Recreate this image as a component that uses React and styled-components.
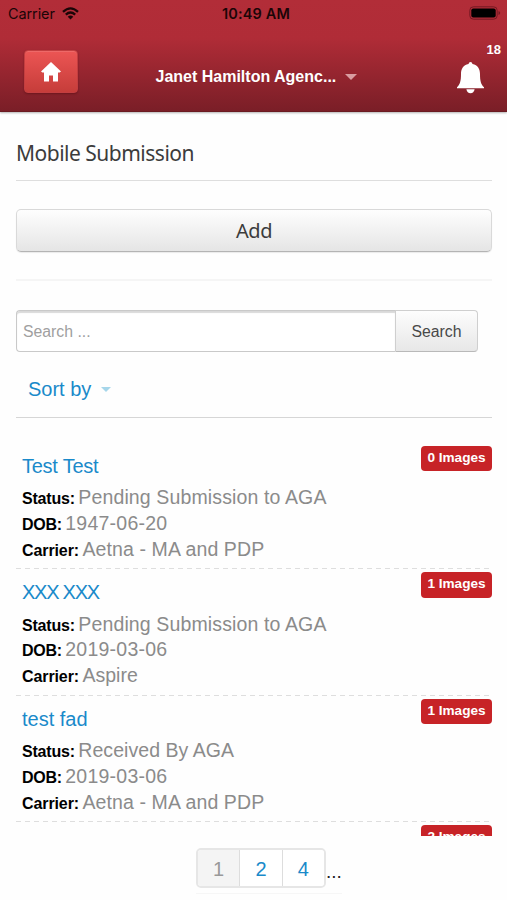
import React from "react";
import styled, { createGlobalStyle } from "styled-components";

const Global = createGlobalStyle`
  * { box-sizing: border-box; }
  body { margin: 0; background: #fff; }
`;

const Screen = styled.div`
  width: 507px;
  height: 900px;
  overflow: hidden;
  display: flex;
  flex-direction: column;
  background: #fefefe;
  color: #333;
  font-family: "Liberation Sans", Arial, sans-serif;
  white-space: nowrap;
`;

const Header = styled.header`
  flex: none;
  height: 112px;
  background: linear-gradient(#b22d38 0, #b02c37 38px, #7a1e27 111px);
  border-bottom: 1px solid #6b1b22;
  box-shadow: 0 1px 2px rgba(0, 0, 0, 0.3);
`;

const StatusBar = styled.div`
  height: 28px;
  display: grid;
  grid-template-columns: 1fr auto 1fr;
  align-items: center;
  padding: 0 6px 0 8px;
  font-family: Inter, sans-serif;
  font-size: 14.5px;
  line-height: 18px;
  color: #1b0507;
`;

const Carrier = styled.div`
  display: flex;
  align-items: center;
  gap: 7px;
  margin-top: -1px;
  letter-spacing: -0.1px;
`;

const Clock = styled.div`
  font-weight: 600;
  letter-spacing: 0.15px;
  margin: -1px -3px 0 0;
`;

const BatteryIcon = styled.svg`
  display: block;
  justify-self: end;
  margin-top: -2px;
`;

const NavBar = styled.nav`
  height: 83px;
  display: flex;
  align-items: flex-start;
  padding: 22px 6px 0 24px;
`;

const HomeButton = styled.button`
  width: 54px;
  height: 43px;
  padding: 0;
  border: 1px solid #c33e40;
  border-radius: 4px;
  background: linear-gradient(#ec5554, #c63d3a);
  box-shadow: 0 1px 2px rgba(60, 0, 0, 0.35), inset 0 1px 0 rgba(255, 255, 255, 0.12);
  display: flex;
  align-items: center;
  justify-content: center;
`;

const Agency = styled.div`
  margin: 18px 0 0 77.5px;
  display: flex;
  align-items: center;
  gap: 9px;
  font-size: 16px;
  line-height: 18px;
  font-weight: bold;
  color: #fff;
`;

const Caret = styled.span`
  border: ${(p) => p.$size}px solid transparent;
  border-top-color: ${(p) => p.$color};
  border-bottom: 0;
`;

const Alerts = styled.div`
  margin: -8px 0 0 auto;
  display: flex;
  flex-direction: column;
  align-items: flex-end;
  color: #fff;
  font: bold 13px/16px "Liberation Sans", sans-serif;
`;

const BellIcon = styled.svg`
  display: block;
  margin: 4px 17px 0 0;
`;

const Content = styled.main`
  height: 724px;
  overflow: hidden;
  padding: 0 15px 0 16px;
`;

const Title = styled.h1`
  margin: 0;
  height: 69px;
  padding-top: 26px;
  border-bottom: 1px solid #dedede;
  font: 400 21px/30px "Noto Sans", sans-serif;
  letter-spacing: ${(p) => p.$track}px;
  color: #3c3c3c;
`;

const AddButton = styled.button`
  display: block;
  width: 100%;
  height: 43px;
  margin-top: 28px;
  padding: 0;
  border: 1px solid #d9d9d9;
  border-bottom-color: #b4b4b4;
  border-radius: 5px;
  background: linear-gradient(#fefefe, #e5e5e5);
  box-shadow: 0 1px 1px rgba(0, 0, 0, 0.08);
  font: 400 20px/38px "Noto Sans", sans-serif;
  letter-spacing: -0.4px;
  color: #3c3c3c;
`;

const Divider = styled.hr`
  border: 0;
  height: 2px;
  margin: 27px 0 29px;
  background: #f5f5f5;
`;

const SearchRow = styled.form`
  display: flex;
  width: 462px;
  height: 42px;
`;

const SearchInput = styled.input`
  width: 379px;
  height: 42px;
  padding: 1px 6px 0;
  border: 1px solid #c9c9c9;
  border-right: 0;
  border-radius: 4px 0 0 4px;
  outline: 0;
  background: #fff;
  box-shadow: inset 0 2px 1px rgba(0, 0, 0, 0.15);
  font: 15.8px "Liberation Sans", sans-serif;
  &::placeholder { color: #a0a0a0; opacity: 1; }
`;

const SearchButton = styled.button`
  flex: 1;
  padding: 1px 0 0;
  border: 1px solid #cfcfcf;
  border-bottom-color: #b9b9b9;
  border-radius: 0 4px 4px 0;
  background: linear-gradient(#fdfdfd, #e7e7e7);
  font: 15.8px "Liberation Sans", sans-serif;
  color: #484848;
`;

const SortBar = styled.div`
  height: 66px;
  padding: 25px 12px 0;
  border-bottom: 1px solid #d6d6d6;
  display: flex;
  align-items: flex-start;
  gap: 10px;
  font-size: 20px;
  line-height: 24px;
  color: #1a8aca;
  ${Caret} { margin-top: 10px; }
`;

const List = styled.ul`
  list-style: none;
  margin: 24.5px 0 0;
  padding: 0;
`;

const Item = styled.li`
  height: 126.5px;
  padding: 3px 0 0 6px;
  display: flex;
  justify-content: space-between;
  align-items: flex-start;
  background: repeating-linear-gradient(90deg, #dedede 0 5px, transparent 5px 9px) left bottom / 100% 1px no-repeat;
`;

const ItemTitle = styled.div`
  margin: 8px 0 7.8px;
  height: 24px;
  font-size: 20px;
  line-height: 24px;
  letter-spacing: ${(p) => p.$track || 0}px;
  color: #1a8aca;
`;

const Field = styled.div`
  height: 25.7px;
  line-height: 25.7px;
  display: flex;
  align-items: baseline;
  gap: 3.5px;
`;

const Label = styled.b`
  font-size: 16px;
  letter-spacing: ${(p) => p.$track}px;
  color: #000;
`;

const Value = styled.span`
  font-size: 19.5px;
  letter-spacing: ${(p) => p.$track}px;
  color: #8b8b8b;
`;

const Badge = styled.span`
  width: 71px;
  height: 25.5px;
  border-radius: 4px;
  background: #c72327;
  color: #fff;
  text-align: center;
  font-size: 13.6px;
  line-height: 23px;
  font-weight: bold;
`;

const Footer = styled.footer`
  height: 64px;
  display: flex;
  justify-content: flex-start;
  padding: 12px 0 0 196px;
`;

const Pager = styled.div`
  display: flex;
  height: 46px;
  border-bottom: 1px solid #f6f6f6;
`;

const Pages = styled.div`
  display: flex;
  width: 130px;
  height: 40px;
  border: 2px solid #e6e6e6;
  border-radius: 5px;
  overflow: hidden;
`;

const Page = styled.a`
  flex: 1;
  text-align: center;
  font-size: 20px;
  line-height: 38px;
  color: ${(p) => (p.$current ? "#999" : "#1a8aca")};
  background: ${(p) => (p.$current ? "#f4f4f4" : "#fff")};
  & + & { border-left: 1px solid #ddd; }
`;

const More = styled.span`
  font-size: 19px;
  line-height: 20px;
  margin-top: 14px;
  color: #222;
`;

const labels = [["Status:", -0.2], ["DOB:", -0.3], ["Carrier:", -0.1]];

const items = [
  { name: "Test Test", images: 0, track: -0.25, values: [["Pending Submission to AGA", 0.13], ["1947-06-20", 0.25], ["Aetna - MA and PDP", 0.1]] },
  { name: "XXX XXX", images: 1, track: -1.25, values: [["Pending Submission to AGA", 0.13], ["2019-03-06", 0.25], ["Aspire", 0]] },
  { name: "test fad", images: 1, track: 0, values: [["Received By AGA", 0.05], ["2019-03-06", 0.25], ["Aetna - MA and PDP", 0.1]] },
  { name: "", images: 2, values: [] },
];

export default function App() {
  return (
    <Screen>
      <Global />
      <Header>
        <StatusBar>
          <Carrier>
            Carrier
            <svg width="17" height="13" viewBox="0 0 17 13" fill="none" stroke="#1b0507" strokeWidth="2.3">
              <path d="M1 4.8Q8.5-2.1 16 4.8M3.8 7.6q4.7-4.2 9.4 0" />
              <path d="M5.7 9.7q2.8-2.3 5.6 0L8.5 12.5z" fill="#1b0507" stroke="none" />
            </svg>
          </Carrier>
          <Clock>10:49 AM</Clock>
          <BatteryIcon width="32" height="14" viewBox="0 0 32 14">
            <rect x="0.8" y="0.8" width="27.4" height="12.4" rx="3.6" fill="none" stroke="#751923" />
            <rect x="2.3" y="2.4" width="24.4" height="9.2" rx="2" fill="#000" />
            <path d="M29.5 5v4q1.7-.7 1.7-2t-1.7-2z" fill="#751923" />
          </BatteryIcon>
        </StatusBar>
        <NavBar>
          <HomeButton aria-label="Home">
            <svg width="20" height="20" viewBox="0 0 20 20" fill="#fff">
              <path d="M10 0 20 9.5 18.6 10.6H17V19.4H12V13.4H8V19.4H3V10.6H1.4L0 9.5Z" />
            </svg>
          </HomeButton>
          <Agency>Janet Hamilton Agenc...<Caret $size={6} $color="#d99da1" /></Agency>
          <Alerts>
            18
            <BellIcon width="27" height="32" viewBox="0 0 27 32" fill="#fff">
              <path d="M13.5 0q1.6 0 2 1.9C20.8 3 23 7 23 12c0 7 1 10.6 4 13.2v1.1H0v-1.1C3 22.6 4 19 4 12 4 7 6.2 3 11.5 1.9Q11.9 0 13.5 0Z" />
              <path d="M9.4 27.3h8.2q-.8 3.9-4.1 3.9t-4.1-3.9Z" />
            </BellIcon>
          </Alerts>
        </NavBar>
      </Header>
      <Content>
        <Title $track={-0.5}>Mobile Submission</Title>
        <AddButton>Add</AddButton>
        <Divider />
        <SearchRow>
          <SearchInput placeholder="Search ..." />
          <SearchButton type="button">Search</SearchButton>
        </SearchRow>
        <SortBar>Sort by<Caret $size={5.5} $color="#a6d6ea" /></SortBar>
        <List>
          {items.map((item, n) => (
            <Item key={n}>
              <div>
                <ItemTitle $track={item.track}>{item.name}</ItemTitle>
                {item.values.map(([value, track], i) => (
                  <Field key={i}>
                    <Label $track={labels[i][1]}>{labels[i][0]}</Label>
                    <Value $track={track}>{value}</Value>
                  </Field>
                ))}
              </div>
              <Badge>{item.images} Images</Badge>
            </Item>
          ))}
        </List>
      </Content>
      <Footer>
        <Pager>
          <Pages>
            <Page $current>1</Page>
            <Page>2</Page>
            <Page>4</Page>
          </Pages>
          <More>...</More>
        </Pager>
      </Footer>
    </Screen>
  );
}
